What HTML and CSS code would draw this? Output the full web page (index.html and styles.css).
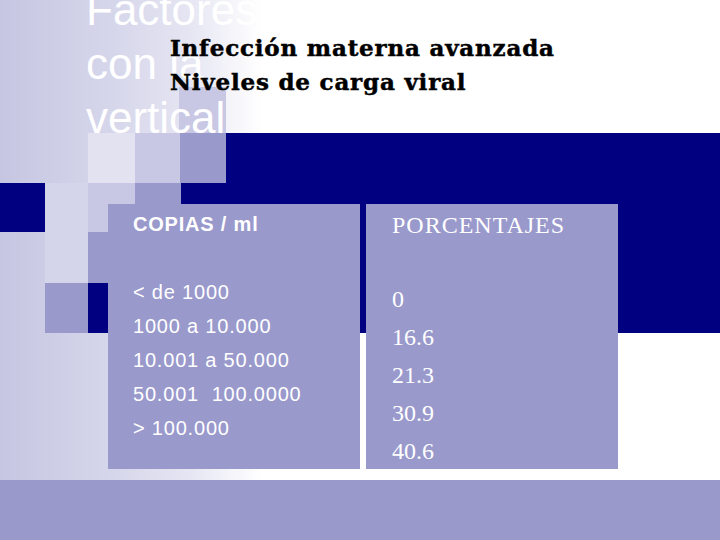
FILE: index.html
```html
<!DOCTYPE html>
<html lang="es">
<head>
<meta charset="utf-8">
<title>Niveles de carga viral</title>
<link rel="stylesheet" href="styles.css">
</head>
<body>
<div class="slide">
  <div class="deco" aria-hidden="true">
    <div class="sq sq-a"></div>
    <div class="sq sq-b"></div>
    <div class="sq sq-c"></div>
    <div class="sq sq-d"></div>
    <div class="sq band-top"></div>
    <div class="sq band-main"></div>
    <div class="sq sq-e"></div>
    <div class="sq sq-f"></div>
    <div class="sq sq-g"></div>
    <div class="sq sq-h"></div>
    <div class="sq sq-i"></div>
    <div class="sq sq-j"></div>
    <div class="sq sq-k"></div>
  </div>

  <header class="head">
    <h1 class="title">Factores<br>con la<br>vertical</h1>
    <p class="subtitle">Infección materna avanzada<br>Niveles de carga viral</p>
  </header>

  <main class="table">
    <section class="card card-left">
      <h2 class="card-head">COPIAS / ml</h2>
      <ul class="rows">
        <li>&lt; de 1000</li>
        <li>1000 a 10.000</li>
        <li>10.001 a 50.000</li>
        <li>50.001&nbsp; 100.0000</li>
        <li>&gt; 100.000</li>
      </ul>
    </section>
    <section class="card card-right">
      <h2 class="card-head">PORCENTAJES</h2>
      <ul class="rows">
        <li>0</li>
        <li>16.6</li>
        <li>21.3</li>
        <li>30.9</li>
        <li>40.6</li>
      </ul>
    </section>
  </main>

  <footer class="foot"></footer>
</div>
</body>
</html>
```

FILE: styles.css
```css
* {
  box-sizing: border-box;
  margin: 0;
  padding: 0;
}

html,
body {
  margin: 0;
  background: #ffffff;
}

.slide {
  position: relative;
  width: 720px;
  height: 540px;
  overflow: hidden;
  display: flex;
  flex-direction: column;
  background: linear-gradient(to right, #c6c6e2 0, #d4d4ea 100px, #e4e4f2 185px, #ffffff 262px);
}

/* decorative pixel squares of the template */
.deco {
  position: absolute;
  inset: 0;
}

.sq {
  position: absolute;
}

.sq-a { left: 179px; top: 87px;  width: 47px;  height: 46px;  background: #c8c8e4; }
.sq-b { left: 88px;  top: 133px; width: 47px;  height: 50px;  background: #e2e2f1; }
.sq-c { left: 135px; top: 133px; width: 45px;  height: 50px;  background: #c8c8e4; }
.sq-d { left: 180px; top: 133px; width: 46px;  height: 50px;  background: #9999cc; }
.band-top  { left: 226px; top: 133px; width: 494px; height: 50px;  background: #000080; }
.band-main { left: 181px; top: 183px; width: 539px; height: 150px; background: #000080; }
.sq-e { left: 0;     top: 183px; width: 45px;  height: 49px;  background: #000080; }
.sq-f { left: 45px;  top: 183px; width: 43px;  height: 100px; background: #d4d4ea; }
.sq-g { left: 88px;  top: 183px; width: 47px;  height: 49px;  background: #c8c8e4; }
.sq-h { left: 135px; top: 183px; width: 46px;  height: 21px;  background: #9999cc; }
.sq-i { left: 88px;  top: 232px; width: 20px;  height: 51px;  background: #9999cc; }
.sq-j { left: 45px;  top: 283px; width: 43px;  height: 50px;  background: #9999cc; }
.sq-k { left: 88px;  top: 283px; width: 20px;  height: 50px;  background: #000080; }

/* header: title and subtitle share one grid cell */
.head {
  position: relative;
  height: 204px;
  flex: none;
  display: grid;
  grid-template: 1fr / 1fr;
  align-items: start;
}

.title {
  grid-area: 1 / 1;
  margin: -17px 0 0 86px;
  font-family: "Liberation Sans", Arial, sans-serif;
  font-weight: normal;
  font-size: 44px;
  line-height: 54px;
  color: #ffffff;
}

.subtitle {
  grid-area: 1 / 1;
  margin: 31px 0 0 170px;
  font-family: "DejaVu Serif", "Liberation Serif", serif;
  font-weight: bold;
  font-size: 23px;
  letter-spacing: 0.8px;
  line-height: 34px;
  color: #000000;
  -webkit-text-stroke: 0.5px #000000;
}

/* two-column table */
.table {
  position: relative;
  display: flex;
  gap: 6px;
  margin-left: 108px;
  height: 265px;
  flex: none;
}

.card {
  width: 252px;
  background: #9999cc;
  color: #ffffff;
}

.rows {
  list-style: none;
}

.card-left {
  padding: 3px 0 0 25px;
  font-family: "Liberation Sans", Arial, sans-serif;
  font-size: 20px;
  letter-spacing: 0.8px;
  line-height: 34px;
}

.card-left .card-head {
  font-size: 20px;
  font-weight: bold;
  line-height: 34px;
  margin-bottom: 34px;
}

.card-right {
  padding: 2px 0 0 26px;
  font-family: "Liberation Serif", "Times New Roman", serif;
  font-size: 24px;
  line-height: 38px;
}

.card-right .card-head {
  font-size: 24px;
  font-weight: normal;
  letter-spacing: 1px;
  line-height: 38px;
  margin-bottom: 36px;
}

.foot {
  margin-top: 11px;
  height: 60px;
  flex: none;
  background: #9999cc;
}
```
